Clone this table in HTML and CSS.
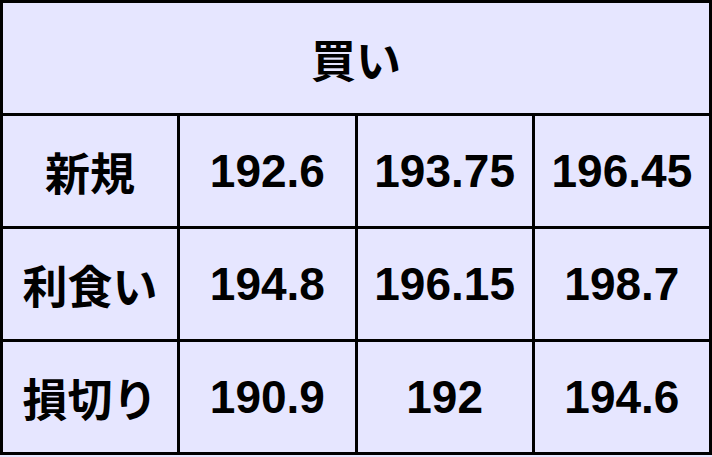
FILE: index.html
```html
<!DOCTYPE html>
<html lang="ja">
<head>
<meta charset="utf-8">
<link rel="stylesheet" href="styles.css">
</head>
<body>
<table class="grid">
  <tr class="head"><th colspan="4" class="jp">買い</th></tr>
  <tr><td class="jp">新規</td><td>192.6</td><td>193.75</td><td>196.45</td></tr>
  <tr><td class="jp">利食い</td><td>194.8</td><td>196.15</td><td>198.7</td></tr>
  <tr><td class="jp">損切り</td><td>190.9</td><td>192</td><td>194.6</td></tr>
</table>
</body>
</html>
```
FILE: styles.css
```css
html, body {
  margin: 0;
  padding: 0;
  background: #e6e6ff;
}
.grid {
  width: 712px;
  height: 455px;
  border-collapse: collapse;
  table-layout: fixed;
  background: #e6e6ff;
  border: 3px solid #000;
}
.grid th, .grid td {
  border: 3px solid #000;
  text-align: center;
  vertical-align: middle;
  padding: 0;
  color: #000;
  font-family: "Liberation Sans", Arial, sans-serif;
  font-weight: 700;
  font-size: 46px;
  height: 108px;
  line-height: 1;
}
.grid .jp {
  font-family: "Noto Sans CJK JP", sans-serif;
  font-weight: 700;
  font-size: 45px;
}
```
